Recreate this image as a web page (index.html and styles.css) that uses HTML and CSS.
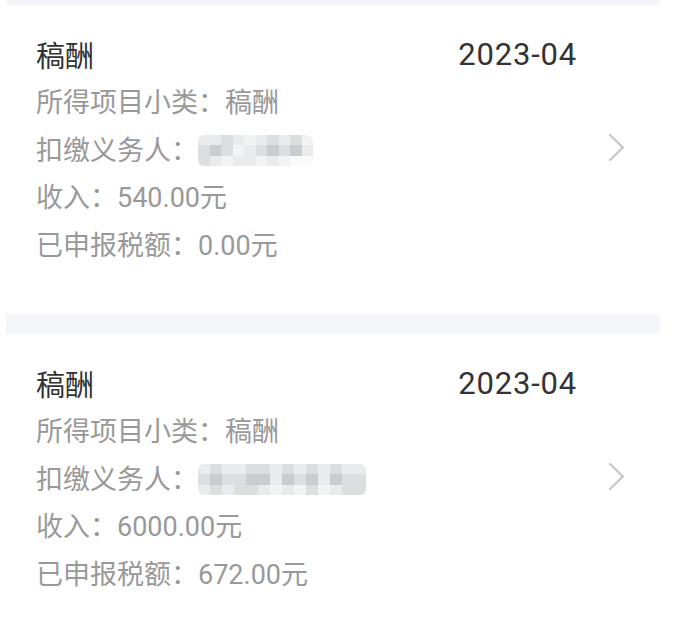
FILE: index.html
```html
<!DOCTYPE html>
<html lang="zh-CN">
<head>
    <meta charset="UTF-8">
    <meta name="viewport" content="width=device-width, initial-scale=1.0">
    <title>收入纳税明细</title>
    <link rel="stylesheet" href="styles.css">
</head>
<body>
    <div class="list">
        <div class="gap gap-top"></div>

        <div class="card">
            <div class="info">
                <div class="head">
                    <span class="title">稿酬</span>
                    <span class="date">2023-04</span>
                </div>
                <div class="row">所得项目小类：稿酬</div>
                <div class="row">扣缴义务人：<span class="mosaic mosaic-short">
                    <i class="m1"></i><i class="m1"></i><i class="m2"></i><i class="m1"></i><i class="m4"></i><i class="m1"></i><i class="m2"></i><i class="m1"></i><i class="m2"></i><i class="m4"></i>
                    <i class="m2"></i><i class="m3"></i><i class="m2"></i><i class="m4"></i><i class="m1"></i><i class="m2"></i><i class="m3"></i><i class="m2"></i><i class="m3"></i><i class="m1"></i>
                    <i class="m2"></i><i class="m1"></i><i class="m4"></i><i class="m1"></i><i class="m1"></i><i class="m4"></i><i class="m1"></i><i class="m4"></i><i class="m0"></i><i class="m0"></i>
                </span></div>
                <div class="row">收入：540.00元</div>
                <div class="row">已申报税额：0.00元</div>
            </div>
            <svg class="arrow" viewBox="0 0 17 29" width="17" height="29">
                <polyline points="2,2 15,14.5 2,27" />
            </svg>
        </div>

        <div class="gap"></div>

        <div class="card">
            <div class="info">
                <div class="head">
                    <span class="title">稿酬</span>
                    <span class="date">2023-04</span>
                </div>
                <div class="row">所得项目小类：稿酬</div>
                <div class="row">扣缴义务人：<span class="mosaic mosaic-long">
                    <i class="m1"></i><i class="m2"></i><i class="m1"></i><i class="m1"></i><i class="m2"></i><i class="m2"></i><i class="m1"></i><i class="m2"></i><i class="m1"></i><i class="m2"></i><i class="m1"></i><i class="m2"></i><i class="m1"></i><i class="m1"></i>
                    <i class="m2"></i><i class="m3"></i><i class="m2"></i><i class="m2"></i><i class="m3"></i><i class="m3"></i><i class="m1"></i><i class="m3"></i><i class="m2"></i><i class="m3"></i><i class="m1"></i><i class="m3"></i><i class="m2"></i><i class="m2"></i>
                    <i class="m1"></i><i class="m2"></i><i class="m1"></i><i class="m2"></i><i class="m2"></i><i class="m1"></i><i class="m4"></i><i class="m1"></i><i class="m4"></i><i class="m2"></i><i class="m4"></i><i class="m1"></i><i class="m2"></i><i class="m2"></i>
                </span></div>
                <div class="row">收入：6000.00元</div>
                <div class="row">已申报税额：672.00元</div>
            </div>
            <svg class="arrow" viewBox="0 0 17 29" width="17" height="29">
                <polyline points="2,2 15,14.5 2,27" />
            </svg>
        </div>
    </div>
</body>
</html>
```

FILE: styles.css
```css
body {
    margin: 0;
    padding: 0;
    background-color: #ffffff;
    font-family: "Roboto", "Noto Sans CJK SC", sans-serif;
}
.list {
    padding: 0 17px 0 6px;
}
.gap {
    height: 20px;
    background-color: #f5f6f9;
}
.gap-top {
    height: 5px;
}
.card {
    display: flex;
    align-items: center;
    background-color: #ffffff;
    padding: 27px 0 44px 30px;
}
.info {
    flex: 1;
}
.head {
    display: flex;
    justify-content: space-between;
    align-items: center;
    height: 44px;
    margin-bottom: 4px;
}
.title {
    font-size: 29px;
    color: #333333;
}
.date {
    font-size: 31px;
    color: #333333;
    letter-spacing: 0.8px;
}
.row {
    font-size: 27px;
    line-height: 47.5px;
    color: #999999;
}
.arrow {
    flex: none;
    margin: 0 35px 8px 31px;
}
.arrow polyline {
    fill: none;
    stroke: #c6c6c6;
    stroke-width: 2.2;
    stroke-linecap: round;
    stroke-linejoin: round;
}
.mosaic {
    display: inline-grid;
    vertical-align: middle;
    border-radius: 6px;
    overflow: hidden;
    margin-top: -4px;
}
.mosaic-short {
    grid-template-columns: repeat(10, 11.5px);
    grid-template-rows: repeat(3, 10.5px);
}
.mosaic-long {
    grid-template-columns: repeat(14, 12px);
    grid-template-rows: repeat(3, 10.5px);
}
.mosaic i {
    display: block;
}
.m0 { background-color: #fafafa; }
.m1 { background-color: #e9ebec; }
.m2 { background-color: #dcdfe0; }
.m3 { background-color: #c9cdcf; }
.m4 { background-color: #f2f3f3; }
```
